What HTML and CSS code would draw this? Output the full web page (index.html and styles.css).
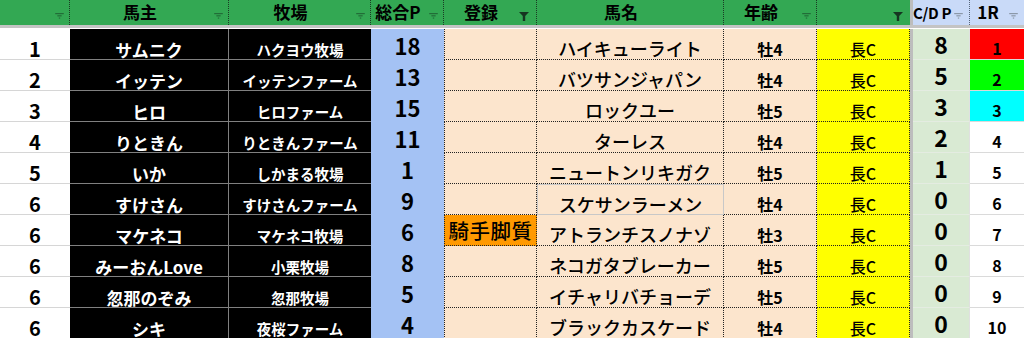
FILE: index.html
```html
<!DOCTYPE html>
<html lang="ja">
<head>
<meta charset="utf-8">
<title>馬主一覧</title>
<link rel="stylesheet" href="styles.css">
</head>
<body>
<div class="sheet">
  <div class="hdr">
    <div class="h g sep"><svg class="flt" viewBox="0 0 10 7"><rect x="0" y="0" width="10" height="1.4"/><rect x="2.5" y="2.6" width="5" height="1.4"/><rect x="4.2" y="5.2" width="1.6" height="1.4"/></svg></div>
    <div class="h g sep"><span>馬主</span><svg class="flt" viewBox="0 0 10 7"><rect x="0" y="0" width="10" height="1.4"/><rect x="2.5" y="2.6" width="5" height="1.4"/><rect x="4.2" y="5.2" width="1.6" height="1.4"/></svg></div>
    <div class="h g sep"><span>牧場</span><svg class="flt" viewBox="0 0 10 7"><rect x="0" y="0" width="10" height="1.4"/><rect x="2.5" y="2.6" width="5" height="1.4"/><rect x="4.2" y="5.2" width="1.6" height="1.4"/></svg></div>
    <div class="h g sep"><span>総合P</span><svg class="flt" viewBox="0 0 10 7"><rect x="0" y="0" width="10" height="1.4"/><rect x="2.5" y="2.6" width="5" height="1.4"/><rect x="4.2" y="5.2" width="1.6" height="1.4"/></svg></div>
    <div class="h g sep"><span>登録</span><svg class="flt on" viewBox="0 0 10 9"><polygon points="0,0 10,0 6.2,4 6.2,9 3.8,9 3.8,4"/></svg></div>
    <div class="h g sep"><span>馬名</span></div>
    <div class="h g sep"><span>年齢</span><svg class="flt" viewBox="0 0 10 7"><rect x="0" y="0" width="10" height="1.4"/><rect x="2.5" y="2.6" width="5" height="1.4"/><rect x="4.2" y="5.2" width="1.6" height="1.4"/></svg></div>
    <div class="h g"><svg class="flt on" viewBox="0 0 10 9"><polygon points="0,0 10,0 6.2,4 6.2,9 3.8,9 3.8,4"/></svg></div>
    <div class="bar"></div>
    <div class="h b sep cd"><span>C/D P</span><svg class="flt lite" viewBox="0 0 10 7"><rect x="0" y="0" width="10" height="1.4"/><rect x="2.5" y="2.6" width="5" height="1.4"/><rect x="4.2" y="5.2" width="1.6" height="1.4"/></svg></div>
    <div class="h b"><span>1R</span><svg class="flt lite" viewBox="0 0 10 7"><rect x="0" y="0" width="10" height="1.4"/><rect x="2.5" y="2.6" width="5" height="1.4"/><rect x="4.2" y="5.2" width="1.6" height="1.4"/></svg></div>
  </div>
  <div class="band"></div>
  <div class="gap"></div>

  <div class="row"><div class="c no">1</div><div class="c own">サムニク</div><div class="c farm">ハクヨウ牧場</div><div class="c pt">18</div><div class="c reg"></div><div class="c horse">ハイキューライト</div><div class="c age">牡4</div><div class="c style">長C</div><div class="bar"></div><div class="c cdp">8</div><div class="c r1 red">1</div></div>
  <div class="row"><div class="c no">2</div><div class="c own">イッテン</div><div class="c farm">イッテンファーム</div><div class="c pt">13</div><div class="c reg"></div><div class="c horse">バツサンジャパン</div><div class="c age">牡4</div><div class="c style">長C</div><div class="bar"></div><div class="c cdp">5</div><div class="c r1 lime">2</div></div>
  <div class="row"><div class="c no">3</div><div class="c own">ヒロ</div><div class="c farm">ヒロファーム</div><div class="c pt">15</div><div class="c reg"></div><div class="c horse">ロックユー</div><div class="c age">牡5</div><div class="c style">長C</div><div class="bar"></div><div class="c cdp">3</div><div class="c r1 cyan">3</div></div>
  <div class="row"><div class="c no">4</div><div class="c own">りときん</div><div class="c farm">りときんファーム</div><div class="c pt">11</div><div class="c reg"></div><div class="c horse">ターレス</div><div class="c age">牡4</div><div class="c style">長C</div><div class="bar"></div><div class="c cdp">2</div><div class="c r1">4</div></div>
  <div class="row"><div class="c no">5</div><div class="c own">いか</div><div class="c farm">しかまる牧場</div><div class="c pt">1</div><div class="c reg"></div><div class="c horse">ニュートンリキガク</div><div class="c age">牡5</div><div class="c style">長C</div><div class="bar"></div><div class="c cdp">1</div><div class="c r1">5</div></div>
  <div class="row"><div class="c no">6</div><div class="c own">すけさん</div><div class="c farm">すけさんファーム</div><div class="c pt">9</div><div class="c reg"></div><div class="c horse sel">スケサンラーメン</div><div class="c age">牡4</div><div class="c style">長C</div><div class="bar"></div><div class="c cdp">0</div><div class="c r1">6</div></div>
  <div class="row"><div class="c no">6</div><div class="c own">マケネコ</div><div class="c farm">マケネコ牧場</div><div class="c pt">6</div><div class="c reg jq">騎手脚質</div><div class="c horse">アトランチスノナゾ</div><div class="c age">牡3</div><div class="c style">長C</div><div class="bar"></div><div class="c cdp">0</div><div class="c r1">7</div></div>
  <div class="row"><div class="c no">6</div><div class="c own">みーおんLove</div><div class="c farm">小栗牧場</div><div class="c pt">8</div><div class="c reg"></div><div class="c horse">ネコガタブレーカー</div><div class="c age">牡5</div><div class="c style">長C</div><div class="bar"></div><div class="c cdp">0</div><div class="c r1">8</div></div>
  <div class="row"><div class="c no">6</div><div class="c own">忽那のぞみ</div><div class="c farm">忽那牧場</div><div class="c pt">5</div><div class="c reg"></div><div class="c horse">イチャリバチョーデ</div><div class="c age">牡5</div><div class="c style">長C</div><div class="bar"></div><div class="c cdp">0</div><div class="c r1">9</div></div>
  <div class="row"><div class="c no">6</div><div class="c own">シキ</div><div class="c farm">夜桜ファーム</div><div class="c pt">4</div><div class="c reg"></div><div class="c horse">ブラックカスケード</div><div class="c age">牡4</div><div class="c style">長C</div><div class="bar"></div><div class="c cdp">0</div><div class="c r1">10</div></div>
</div>
</body>
</html>
```

FILE: styles.css
```css
* { box-sizing: border-box; }
html, body { margin: 0; padding: 0; background: #fff; }
body {
  font-family: "Noto Sans CJK JP", "Noto Sans", sans-serif;
  color: #000;
  width: 1024px;
}
.sheet { display: flex; flex-direction: column; width: 1024px; }

.hdr, .row {
  display: grid;
  grid-template-columns: 70px 159px 142px 73px 93px 187px 93px 93px 3px 57px 54px;
}
.hdr { height: 25px; }
.band { height: 3px; background: #c4c4c4; }
.gap { height: 1px; background: #fff; }
.row { height: 31px; }

.bar { background: #bdbdbd; }

/* header */
.h {
  position: relative;
  display: flex;
  align-items: center;
  justify-content: center;
  padding-right: 18px;
  font-size: 17px;
  font-weight: 700;
  line-height: 1.2;
  white-space: nowrap;
}
.h.g { background: #33a853; }
.h.b { background: #c9daf8; }
.h.sep { border-right: 1px dotted #1b3a24; }
.h.b.sep { border-right-color: #55657a; }
.h.cd { justify-content: flex-start; padding-right: 0; font-size: 15px; letter-spacing: -0.3px; }
.flt {
  position: absolute;
  right: 5px;
  top: 13px;
  width: 9px;
  height: 6px;
  fill: rgba(20, 60, 35, 0.55);
}
.flt.lite { fill: #8b98a8; right: 6px; }
.h.cd .flt { background: #c9daf8; box-shadow: 0 0 0 2px #c9daf8; right: 6px; }
.flt.on { width: 10px; height: 9px; top: 12px; right: 7px; fill: #163521; }

/* body cells */
.c {
  display: flex;
  align-items: center;
  justify-content: center;
  white-space: nowrap;
  line-height: 1;
}
.no {
  font-size: 20px; font-weight: 700;
  padding-top: 9px;
  border-bottom: 1px solid #d6d6d6;
}
.own, .farm {
  background: #000; color: #fff; font-weight: 700;
  border-bottom: 1px solid #808080;
}
.own { font-size: 17px; padding-top: 10px; border-right: 1px solid #808080; }
.farm { font-size: 14.5px; padding-top: 12px; }
.pt { background: #a4c2f4; font-size: 22px; font-weight: 700; padding-top: 1px; }
.reg, .horse, .age {
  background: #fce5cd;
  border-bottom: 1px dotted #222;
  border-right: 1px dotted #222;
}
.reg { border-left: 1px dotted #222; }
.jq { background: #ff9900; font-size: 20.5px; font-weight: 500; letter-spacing: 0.5px; padding-top: 1px; }
.horse { font-size: 18px; font-weight: 500; padding-top: 8px; }
.horse.sel { border: 1px solid #c8c8c8; }
.age { font-size: 16px; font-weight: 700; padding-top: 9px; }
.style {
  background: #ffff00;
  font-size: 16px; font-weight: 500;
  padding-top: 9px;
  border-bottom: 1px dotted #222;
  border-right: 1px dotted #222;
}
.cdp {
  background: #d9ead3;
  font-size: 23px; font-weight: 700;
  border-bottom: 1px solid #e4ece1;
  border-right: 1px solid #e0e0e0;
}
.r1 {
  font-size: 16px; font-weight: 700;
  padding-top: 8px;
  border-bottom: 1px solid #dadada;
}
.red { background: #ff0000; }
.lime { background: #00ff00; }
.cyan { background: #00ffff; }
```
